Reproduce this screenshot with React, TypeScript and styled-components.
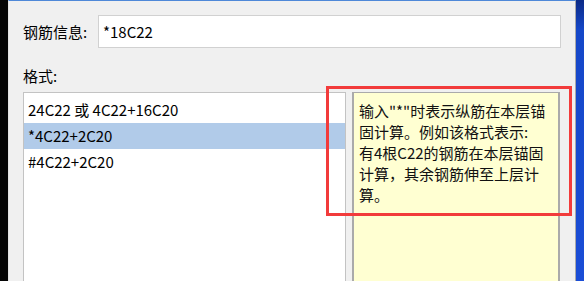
import React from "react";
import styled, { createGlobalStyle } from "styled-components";

const GlobalStyle = createGlobalStyle`
  html, body {
    margin: 0;
    padding: 0;
    background: #000;
  }
  body {
    font-family: "Noto Sans CJK SC", "Noto Sans", sans-serif;
    font-size: 15px;
    color: #000;
  }
`;

const Frame = styled.div`
  display: flex;
  width: 584px;
  height: 281px;
  overflow: hidden;
`;

const LeftEdge = styled.div`
  width: 8px;
  flex: none;
  background: #050505;
`;

const RightEdge = styled.div`
  width: 8px;
  flex: none;
  background: linear-gradient(180deg, #0c2a86 0px, #1547c8 30px, #1a4dd6 100%);
`;

const Dialog = styled.div`
  flex: 1;
  display: flex;
  flex-direction: column;
  background: #f0f0f0;
  border-top: 1px solid #4f88d8;
  border-left: 1px solid #e4e4e4;
  border-right: 1px solid #a9a9a9;
  padding: 14px 15px 0 14px;
`;

const FieldRow = styled.div`
  display: flex;
  align-items: center;
  flex: none;
`;

const Label = styled.span`
  width: 75px;
  flex: none;
  line-height: 20px;
`;

const Input = styled.div`
  flex: 1;
  height: 31px;
  margin-right: -1px;
  border: 1px solid #d1d1d1;
  background: #fff;
  padding-left: 4px;
  display: flex;
  align-items: center;
  line-height: 20px;
`;

const SectionLabel = styled.div`
  flex: none;
  margin-top: 18px;
  line-height: 20px;
  height: 20px;
`;

const Content = styled.div`
  position: relative;
  flex: none;
  display: flex;
  gap: 6px;
  margin-top: 6px;
  height: 210px;
`;

const FormatList = styled.div`
  width: 321px;
  flex: none;
  border: 1px solid #c3c3c3;
  background: #fff;
  padding-top: 4px;
`;

const FormatItem = styled.div<{ selected?: boolean }>`
  height: 26px;
  line-height: 26px;
  padding-left: 4px;
  background: ${(p) => (p.selected ? "#b1cbe9" : "transparent")};
  white-space: nowrap;
`;

const HintBox = styled.div`
  flex: 1;
  border: 2px solid #aaaaaa;
  border-top-width: 1px;
  background: #ffffd2;
  padding: 7px 4px 0 5px;
`;

const HintLine = styled.div`
  line-height: 21px;
  white-space: nowrap;
  color: #111;
`;

const Highlight = styled.div`
  position: absolute;
  left: 303px;
  top: -6px;
  width: 240px;
  height: 124px;
  border: 3px solid #f23b3b;
  pointer-events: none;
`;

const formats = ["24C22 或 4C22+16C20", "*4C22+2C20", "#4C22+2C20"];

const hint = [
  '输入"*"时表示纵筋在本层锚',
  "固计算。例如该格式表示:",
  "有4根C22的钢筋在本层锚固",
  "计算，其余钢筋伸至上层计",
  "算。",
];

const App = () => {
  const selected = 1;
  return (
    <Frame>
      <GlobalStyle />
      <LeftEdge />
      <Dialog>
        <FieldRow>
          <Label>钢筋信息:</Label>
          <Input>*18C22</Input>
        </FieldRow>
        <SectionLabel>格式:</SectionLabel>
        <Content>
          <FormatList>
            {formats.map((f, i) => (
              <FormatItem key={i} selected={i === selected}>
                {f}
              </FormatItem>
            ))}
          </FormatList>
          <HintBox>
            {hint.map((line, i) => (
              <HintLine key={i}>{line}</HintLine>
            ))}
          </HintBox>
          <Highlight />
        </Content>
      </Dialog>
      <RightEdge />
    </Frame>
  );
};

export default App;
